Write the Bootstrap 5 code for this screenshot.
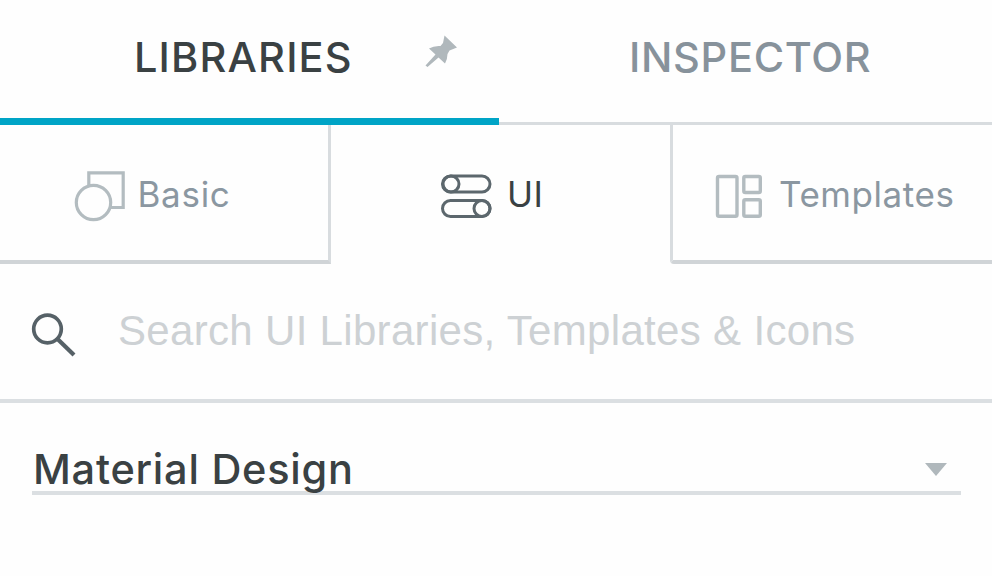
<!DOCTYPE html>
<html lang="en">
<head>
<meta charset="utf-8">
<meta name="viewport" content="width=device-width, initial-scale=1">
<title>Libraries</title>
<link href="https://cdn.jsdelivr.net/npm/bootstrap@5.3.0/dist/css/bootstrap.min.css" rel="stylesheet">
<style>
body{font-family:Inter,"Liberation Sans",sans-serif;background:#fefefe;color:#3a4143;overflow:hidden}
svg{display:block;flex:none;overflow:visible}
.panel-tabs{height:125px}
.panel-tab{height:125px;padding-top:32px;font-size:41.5px;font-weight:500;line-height:50px;white-space:nowrap}
.tab-libraries{width:499px;padding-left:134px;border-bottom:7px solid #00a4c6;letter-spacing:1.15px}
.tab-inspector{padding-left:130px;border-bottom:3px solid #d8dcdf;color:#87929b;letter-spacing:.7px}
.pin{margin:3px 0 0 72px}
.kinds{height:139px}
.kind{font-size:35px;line-height:43px;color:#8b97a1;letter-spacing:.55px;white-space:nowrap;border:0 solid #d8dcdf;padding-top:48px}
.kind-basic{width:331px;padding-left:74px;border-width:0 3px 4px 0;border-bottom-color:#d0d4d7}
.kind-basic span{margin-left:11.500px;letter-spacing:.7px}
.kind-ui{width:339px;padding-left:110px;color:#3a4143}
.kind-ui span{margin-left:15px}
.kind-templates{padding-left:42px;border-width:0 0 4px 3px;border-bottom-color:#d0d4d7;border-bottom-left-radius:4px}
.search{height:139px;border-bottom:4px solid #dbdfe2;padding:43px 0 0 31px}
.search svg{margin-top:-1px}
.search-input{font:42px/48px "Liberation Sans",Arial,sans-serif;letter-spacing:.32px;padding:0;margin-left:41px;border:0;height:48px;background:transparent}
.search-input::placeholder{color:#cdd1d4;opacity:1}
.library{margin:41px 31px 0 32px;padding-left:1px;height:51px;border-bottom:4px solid #dbdfe2;font-size:41.5px;font-weight:500;line-height:50px;letter-spacing:.75px}
.caret{margin:19px 14px 0 0}
</style>
</head>
<body>
<nav class="panel-tabs d-flex">
  <div class="panel-tab tab-libraries d-flex"><span>LIBRARIES</span>
    <svg class="pin" width="34" height="34" viewBox="0 0 34 34"><path d="M19.500 .5L32 12.500L24.500 15.500L22.500 19Q22.500 24 20 28.500L13.500 22.500L2.500 32L.5 30.500L10.500 19.500L4 13.500Q9 10.500 15.500 11L18 8Z" fill="#b0b8bc"/></svg>
  </div>
  <div class="panel-tab tab-inspector flex-grow-1"><span>INSPECTOR</span></div>
</nav>
<div class="kinds d-flex">
  <div class="kind kind-basic d-flex">
    <svg width="52" height="50" viewBox="0 0 52 50" fill="none" stroke="#b3bcc0" stroke-width="3.200"><path d="M14.800 12.500V-.2H49.200V34.500H37"/><circle cx="19.500" cy="29.500" r="17.200"/></svg>
    <span>Basic</span>
  </div>
  <div class="kind kind-ui d-flex">
    <svg width="51" height="50" viewBox="0 0 51 50" fill="none" stroke="#5c676d" stroke-width="3"><rect x="1.500" y="3" width="47.500" height="16" rx="8"/><circle cx="10" cy="11" r="8"/><rect x="1.500" y="27.500" width="47.500" height="16" rx="8"/><circle cx="41" cy="35.500" r="8"/></svg>
    <span>UI</span>
  </div>
  <div class="kind kind-templates d-flex flex-grow-1">
    <svg width="48" height="50" viewBox="0 0 48 50" fill="none" stroke="#b3bcc0" stroke-width="3.400"><rect x="2.500" y="3.500" width="19.500" height="39.700" rx="1.500"/><rect x="28.800" y="3.500" width="16.500" height="16" rx="1.500"/><rect x="28.800" y="26.700" width="16.500" height="16.500" rx="1.500"/></svg>
    <span class="ms-3">Templates</span>
  </div>
</div>
<div class="search d-flex">
  <svg width="46" height="52" viewBox="0 0 46 52" fill="none" stroke="#566167"><circle cx="16.500" cy="23" r="13.800" stroke-width="3.700"/><path d="M26.500 33L43 49" stroke-width="4.200"/></svg>
  <input class="search-input form-control shadow-none" type="text" placeholder="Search UI Libraries, Templates &amp; Icons">
</div>
<div class="library d-flex justify-content-between"><span>Material Design</span>
  <svg class="caret" width="22" height="13" viewBox="0 0 22 13"><path d="M0 0H22L11 13Z" fill="#b0b8bc"/></svg>
</div>
<script src="https://cdn.jsdelivr.net/npm/bootstrap@5.3.0/dist/js/bootstrap.bundle.min.js"></script>
</body>
</html>
